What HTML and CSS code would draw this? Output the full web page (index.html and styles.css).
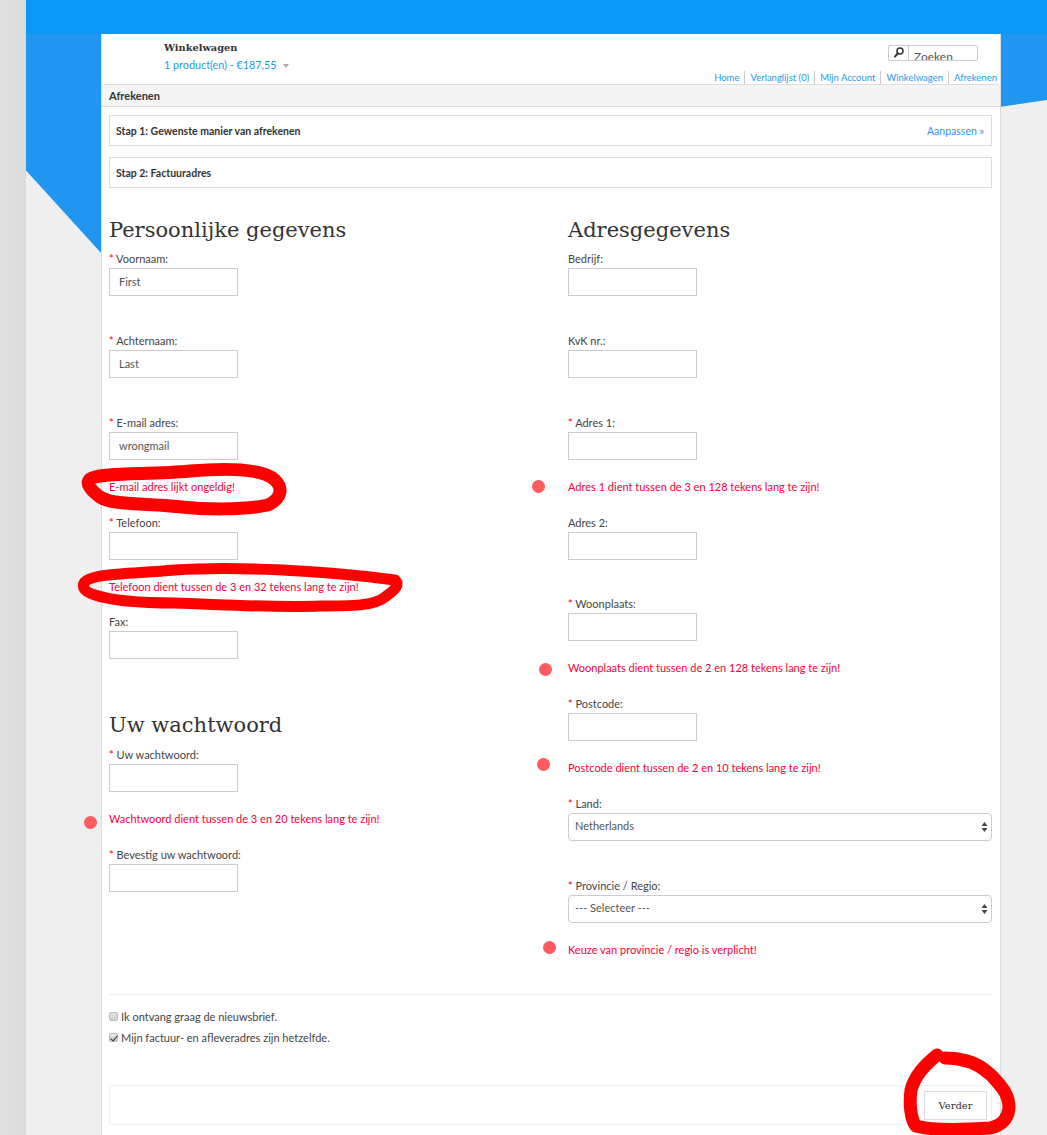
FILE: index.html
```html
<!DOCTYPE html>
<html lang="nl">
<head>
<meta charset="utf-8">
<title>Afrekenen</title>
<link rel="stylesheet" href="styles.css">
</head>
<body>
<div class="strip"></div>
<div class="band"></div>
<div class="wedge-left"></div>
<div class="wedge-right"></div>

<main class="page">
  <header class="header">
    <div class="cart">
      <div class="cart-title">Winkelwagen</div>
      <a class="cart-sum">1 product(en) - €187,55<span class="caret"></span></a>
    </div>
    <div class="header-right">
      <div class="search">
        <span class="search-btn">
          <svg width="10" height="11" viewBox="0 0 10 11"><circle cx="6" cy="4" r="3" fill="none" stroke="#333" stroke-width="1.5"/><path d="M3.8 6.2 L1 9.6" stroke="#333" stroke-width="2" stroke-linecap="round"/></svg>
        </span>
        <span class="search-text">Zoeken</span>
      </div>
      <nav class="links">
        <a>Home</a><a>Verlanglijst (0)</a><a>Mijn Account</a><a>Winkelwagen</a><a>Afrekenen</a>
      </nav>
    </div>
  </header>

  <div class="panel-head">Afrekenen</div>

  <div class="content">
    <div class="step"><b>Stap 1: Gewenste manier van afrekenen</b><a>Aanpassen »</a></div>
    <div class="step"><b>Stap 2: Factuuradres</b></div>

    <div class="columns">
      <section>
        <h2>Persoonlijke gegevens</h2>
        <div class="group"><label><i>*</i> Voornaam:</label><input class="field" value="First"></div>
        <div class="group"><label><i>*</i> Achternaam:</label><input class="field" value="Last"></div>
        <div class="group"><label><i>*</i> E-mail adres:</label><input class="field" value="wrongmail"><p class="error">E-mail adres lijkt ongeldig!</p></div>
        <div class="group tight"><label><i>*</i> Telefoon:</label><input class="field"><p class="error">Telefoon dient tussen de 3 en 32 tekens lang te zijn!</p></div>
        <div class="group"><label>Fax:</label><input class="field"></div>
        <h2 class="second">Uw wachtwoord</h2>
        <div class="group"><label><i>*</i> Uw wachtwoord:</label><input class="field"><p class="error">Wachtwoord dient tussen de 3 en 20 tekens lang te zijn!</p></div>
        <div class="group"><label><i>*</i> Bevestig uw wachtwoord:</label><input class="field"></div>
      </section>
      <section>
        <h2>Adresgegevens</h2>
        <div class="group"><label>Bedrijf:</label><input class="field"></div>
        <div class="group"><label>KvK nr.:</label><input class="field"></div>
        <div class="group"><label><i>*</i> Adres 1:</label><input class="field"><p class="error">Adres 1 dient tussen de 3 en 128 tekens lang te zijn!</p></div>
        <div class="group tight"><label>Adres 2:</label><input class="field"></div>
        <div class="group"><label><i>*</i> Woonplaats:</label><input class="field"><p class="error">Woonplaats dient tussen de 2 en 128 tekens lang te zijn!</p></div>
        <div class="group"><label><i>*</i> Postcode:</label><input class="field"><p class="error">Postcode dient tussen de 2 en 10 tekens lang te zijn!</p></div>
        <div class="group"><label><i>*</i> Land:</label>
          <div class="select-wrap"><select class="select"><option>Netherlands</option></select>
            <svg class="arrows" width="7" height="12" viewBox="0 0 7 12"><path d="M3.5 1 L6.5 5 H0.5Z M3.5 11 L6.5 7 H0.5Z" fill="#444"/></svg></div>
        </div>
        <div class="group"><label><i>*</i> Provincie / Regio:</label>
          <div class="select-wrap"><select class="select"><option>--- Selecteer ---</option></select>
            <svg class="arrows" width="7" height="12" viewBox="0 0 7 12"><path d="M3.5 1 L6.5 5 H0.5Z M3.5 11 L6.5 7 H0.5Z" fill="#444"/></svg></div>
          <p class="error">Keuze van provincie / regio is verplicht!</p>
        </div>
      </section>
    </div>

    <hr class="rule">
    <label class="check"><input type="checkbox"> Ik ontvang graag de nieuwsbrief.</label>
    <label class="check"><input type="checkbox" checked> Mijn factuur- en afleveradres zijn hetzelfde.</label>

    <div class="buttons"><button class="btn">Verder</button></div>
  </div>
</main>

<svg class="marks" width="1047" height="1135" viewBox="0 0 1047 1135">
  <g fill="none" stroke="#fe0000" stroke-linecap="round" stroke-linejoin="round">
    <path stroke-width="13" d="M90 479 C100 472 150 475 190 471 C225 468 262 468 275 480 C283 488 282 498 268 505 C245 510 205 510 170 506 C140 503 112 505 100 497 C92 491 85 484 90 479Z"/>
    <path stroke-width="11" d="M84 583 C90 573 130 574 175 570 C230 566 320 570 395 580 C400 585 395 590 385 597 C375 606 350 606 320 606 C270 608 215 604 175 603 C140 603 110 600 95 595 C85 592 82 588 84 583Z"/>
    <path stroke-width="13" d="M937 1055 C925 1065 915 1075 911 1090 C909 1105 911 1120 916 1126 C930 1130 960 1130 990 1128 C1003 1125 1008 1118 1009 1108 C1009 1095 1003 1088 992 1076 C983 1068 975 1062 962 1060 C955 1058 950 1058 945 1058"/>
  </g>
  <g fill="#fe5a5f">
    <circle cx="538.500" cy="486.500" r="6.500"/>
    <circle cx="545.500" cy="669.500" r="6.500"/>
    <circle cx="543.500" cy="764.500" r="6.500"/>
    <circle cx="90.500" cy="822.500" r="6.500"/>
    <circle cx="549.500" cy="947.500" r="6.500"/>
  </g>
</svg>
</body>
</html>
```

FILE: styles.css
```css
* { box-sizing: border-box; }
html, body { margin: 0; padding: 0; }
body {
  position: relative;
  height: 1135px;
  overflow: hidden;
  background: #efefef;
  font-family: "Lato", "Liberation Sans", sans-serif;
  font-size: 11px;
  color: #444;
}

/* decorative backdrop */
.strip { position: absolute; left: 0; top: 0; width: 26px; height: 1135px; background: linear-gradient(90deg, #dfe0df, #d9dbda); }
.band { position: absolute; left: 26px; right: 0; top: 0; height: 34px; background: #0c96f6; }
.wedge-left { position: absolute; left: 26px; top: 34px; width: 76px; height: 220px; background: #2196f0; clip-path: polygon(0 0, 100% 0, 100% 100%, 0 62%); }
.wedge-right { position: absolute; left: 1001px; top: 34px; width: 46px; height: 75px; background: #2196f0; clip-path: polygon(0 0, 100% 0, 100% 88%, 0 97%); }
.marks { position: absolute; left: 0; top: 0; pointer-events: none; }

.page {
  position: relative;
  margin: 34px 0 0 101px;
  width: 900px;
  height: 1101px;
  background: #fff;
  border-left: 1px solid #ddd;
  border-right: 1px solid #ddd;
}

/* header */
.header { display: flex; justify-content: space-between; height: 50px; }
.cart { padding: 7px 0 0 62px; }
.cart-title { font-family: "DejaVu Serif", serif; font-weight: 700; font-size: 9.800px; line-height: 14px; color: #333; }
.cart-sum { display: block; margin-top: 3px; line-height: 14px; color: #1e9be8; font-size: 10.800px; }
.caret { display: inline-block; margin: 0 0 1px 6px; border: 3.500px solid transparent; border-top: 4px solid #aaa; border-bottom: 0; vertical-align: middle; }
.header-right { display: flex; flex-direction: column; align-items: flex-end; padding-top: 11px; }
.search { display: flex; width: 90px; height: 17px; margin-right: 22px; border: 1px solid #ccc; border-radius: 2px; overflow: hidden; }
.search-btn { display: flex; align-items: center; justify-content: center; width: 20px; border-right: 1px solid #ccc; flex: none; }
.search-text { padding: 3px 0 0 5px; font-size: 12px; line-height: 15px; color: #555; }
.links { display: flex; position: relative; z-index: 1; margin-top: 10px; height: 15px; padding-right: 3px; }
.links a { padding: 0 5px; border-left: 1px solid #ccc; color: #1e9be8; font-size: 9.500px; line-height: 13px; }
.links a:first-child { border-left: 0; }
.links a:last-child { padding-right: 0; }

/* panel */
.panel-head {
  height: 23px;
  padding-left: 7px;
  background: #f5f5f5;
  border: 1px solid #ddd;
  border-width: 1px 0;
  border-radius: 4px 4px 0 0;
  font-weight: 700;
  font-size: 11px;
  line-height: 21px;
  color: #333;
}
.content { padding: 8px 8px 0 7px; }
.step {
  display: flex;
  justify-content: space-between;
  align-items: center;
  height: 31px;
  margin-bottom: 11px;
  padding: 0 7px 0 6px;
  border: 1px solid #ddd;
}
.step b { font-size: 10.500px; color: #333; }
.step a { color: #3d8ff5; font-size: 10.500px; }

.columns { display: grid; grid-template-columns: 424px 424px; gap: 35px; margin-top: 25px; }
section { min-width: 0; }
h2 {
  height: 34px;
  margin: 0 0 2px;
  font-family: "DejaVu Serif", serif;
  font-weight: 400;
  font-size: 21px;
  line-height: 34px;
  color: #333;
}
h2.second { margin: 14px 0 3px; }

.group { padding-bottom: 17px; }
.group.tight { padding-bottom: 16px; }
.group label { display: block; height: 19px; line-height: 19px; font-size: 11px; color: #444; }
.group i { font-style: normal; color: #f00; }
.field {
  display: block;
  width: 129px;
  height: 28px;
  margin-bottom: 18px;
  padding: 0 9px 2px;
  border: 1px solid #ccc;
  border-radius: 0;
  outline: 0;
  font: 11px "Lato", "Liberation Sans", sans-serif;
  color: #555;
}
.error { height: 18px; margin: 0; line-height: 18px; font-size: 11px; color: #f5003a; }
.select-wrap { position: relative; margin-bottom: 18px; }
.select {
  display: block;
  width: 100%;
  height: 28px;
  padding: 0 6px 3px;
  appearance: none;
  background: #fff;
  border: 1px solid #ccc;
  border-radius: 4px;
  font: 11px "Lato", "Liberation Sans", sans-serif;
  color: #555;
}
.arrows { position: absolute; right: 4px; top: 8px; }

.rule { height: 1px; margin: 18px 0 11px; border: 0; background: #eee; }
.check { display: flex; align-items: center; gap: 3px; height: 21px; font-size: 11px; color: #444; }
.check input {
  appearance: none;
  position: relative;
  width: 9px;
  height: 9px;
  margin: 0;
  background: linear-gradient(#e4e4e4, #cfcfcf);
  border: 1px solid #bbb;
  border-radius: 2px;
}
.check input:checked::after {
  content: "";
  position: absolute;
  left: 1.500px;
  top: -0.500px;
  width: 3px;
  height: 6px;
  border: solid #333;
  border-width: 0 1.500px 1.500px 0;
  transform: rotate(40deg);
}
.buttons {
  display: flex;
  justify-content: flex-end;
  align-items: center;
  height: 40px;
  margin-top: 37px;
  padding-right: 4px;
  border: 1px solid #eee;
  border-radius: 3px;
}
.btn {
  width: 63px;
  height: 29px;
  background: #fff;
  border: 1px solid #ddd;
  font-family: "DejaVu Serif", serif;
  font-size: 10px;
  color: #333;
}
```
